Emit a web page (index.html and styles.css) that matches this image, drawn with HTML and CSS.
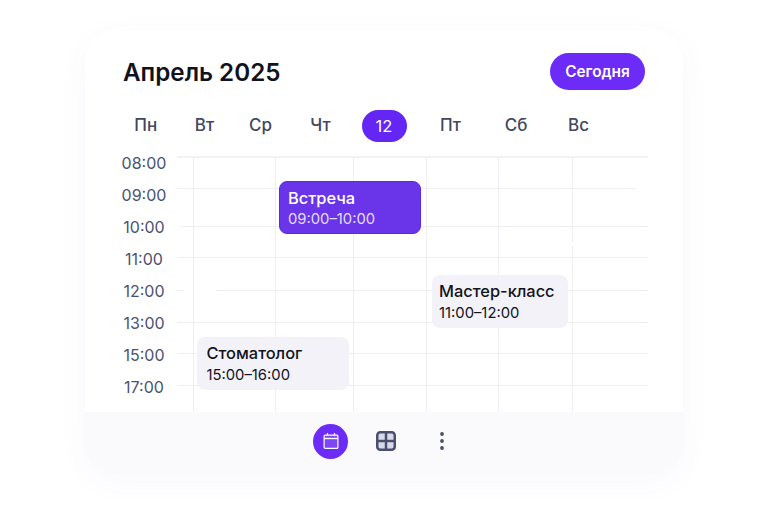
FILE: index.html
```html
<!DOCTYPE html>
<html lang="ru">
<head>
<meta charset="utf-8">
<title>Календарь</title>
<link rel="stylesheet" href="styles.css">
</head>
<body>
<main class="card">
  <div class="content">
    <header class="top">
      <h1 class="title">Апрель 2025</h1>
      <button class="today">Сегодня</button>
    </header>
    <div class="days">
      <span class="day">Пн</span>
      <span class="day">Вт</span>
      <span class="day">Ср</span>
      <span class="day">Чт</span>
      <span class="day-now"><b class="pill">12</b></span>
      <span class="day">Пт</span>
      <span class="day">Сб</span>
      <span class="day">Вс</span>
    </div>
    <div class="schedule">
      <div class="times">
        <span>08:00</span><span>09:00</span><span>10:00</span><span>11:00</span>
        <span>12:00</span><span>13:00</span><span>15:00</span><span>17:00</span>
      </div>
      <svg class="lines" width="598" height="258" viewBox="0 0 598 258" aria-hidden="true">
        <g class="hl">
          <path class="hl-top" d="M92 3H563"/>
          <path d="M92 34.500H551M95 72.500H563M92 103.500H563M92 136.500H99M131 136.500H563M92 168.500H563M92 199.500H563M92 231.500H563"/>
        </g>
        <path class="vl" d="M108.500 3V258M190.500 3V258M268.500 3V258M341.500 3V258M413.500 3V258M487.500 3V88M487.500 92V258"/>
      </svg>
      <article class="event event-meet">
        <h2>Встреча</h2>
        <p>09:00–10:00</p>
      </article>
      <article class="event event-class">
        <h2>Мастер-класс</h2>
        <p>11:00–12:00</p>
      </article>
      <article class="event event-dent">
        <h2>Стоматолог</h2>
        <p>15:00–16:00</p>
      </article>
    </div>
  </div>
  <nav class="bar">
    <span class="nav nav-on">
      <svg width="18" height="18" viewBox="0 0 18 18" fill="none" stroke="#fff" stroke-width="1.200">
        <rect x="2.100" y="3.100" width="13.800" height="13.300" rx="1" fill="#7d46f7"/>
        <path d="M2.100 6.500H15.900" stroke-width="1.400"/>
        <path d="M5.500 1V3.500M12.500 1V3.500"/>
      </svg>
    </span>
    <span class="nav">
      <svg width="20" height="20" viewBox="0 0 20 20" fill="#d9dae5" stroke="#4a4f70" stroke-width="2.500">
        <rect x="1.250" y="1.250" width="17.500" height="17.500" rx="3"/>
        <path d="M10 1.250V18.750M1.250 10H18.750"/>
      </svg>
    </span>
    <span class="nav">
      <svg width="6" height="20" viewBox="0 0 6 20" fill="#4a4f70">
        <circle cx="3" cy="3" r="1.900"/>
        <circle cx="3" cy="10" r="1.900"/>
        <circle cx="3" cy="17" r="1.900"/>
      </svg>
    </span>
  </nav>
</main>
</body>
</html>
```
FILE: styles.css
```css
* { box-sizing: border-box; }
html, body { margin: 0; height: 100%; }
body {
  width: 768px;
  height: 512px;
  overflow: hidden;
  background: #fff;
  font-family: Inter, "Liberation Sans", sans-serif;
  padding: 31px 85px 37px;
}
.card {
  width: 598px;
  height: 444px;
  background: #fff;
  border-radius: 32px;
  overflow: hidden;
  box-shadow: 0 6px 32px rgba(90, 80, 180, 0.045);
  display: flex;
  flex-direction: column;
}
.content { flex: 1; display: flex; flex-direction: column; min-height: 0; }
.top {
  display: flex;
  justify-content: space-between;
  align-items: center;
  padding: 22px 38px 0 38px;
}
.title {
  margin: 2px 0 0;
  font-size: 24.200px;
  line-height: 35px;
  font-weight: 600;
  color: #10131c;
}
.today {
  width: 95px;
  height: 37px;
  border: 0;
  padding: 0;
  border-radius: 19px;
  background: #6c2bf6;
  color: #fff;
  font: 600 15.400px Inter, "Liberation Sans", sans-serif;
}
.days {
  display: grid;
  grid-template-columns: 47.500px 70px 42px 78px 49px 84px 47px 78px;
  margin: 20px 0 0 37px;
  height: 32px;
  align-items: center;
  text-align: center;
  font-size: 17px;
  line-height: 30px;
  font-weight: 500;
  color: #41475f;
}
.day { padding-bottom: 2px; }
.pill {
  display: block;
  width: 45px;
  height: 32px;
  margin: 0 auto;
  border-radius: 16px;
  background: #6426f4;
  color: #fff;
  font-size: 16.500px;
  font-weight: 400;
  line-height: 32px;
}
.schedule { position: relative; flex: 1; margin-top: 12px; }
.times {
  display: flex;
  flex-direction: column;
  width: 48px;
  margin: -7px 0 0 35px;
  text-align: center;
  font-size: 16px;
  line-height: 32px;
  color: #4b5272;
}
.lines { position: absolute; left: 0; top: 0; }
.hl path { stroke: #eeeef4; stroke-width: 1; fill: none; }
.hl .hl-top { stroke: #f2f2f7; stroke-width: 2; }
.vl { stroke: #eeeef4; stroke-width: 1; fill: none; }
.event {
  position: absolute;
  height: 53px;
  border-radius: 8px;
  padding: 6px 9px;
  background: #f3f2f9;
  color: #11131c;
}
.event h2 { margin: 0; font-size: 16.400px; line-height: 20px; font-weight: 500; }
.event p { margin: 2px 0 0; font-size: 14.800px; line-height: 20px; font-weight: 400; }
.event-meet {
  left: 194px;
  top: 27px;
  width: 142px;
  background: #6a35e8;
  border: 1px solid #5a28e6;
  padding: 6px 8px;
  color: #fff;
}
.event-meet p { margin-top: 1px; color: #e4dcfb; }
.event-class { left: 347px; top: 121px; width: 136px; padding-left: 7px; }
.event-dent { left: 112px; top: 183px; width: 152px; padding-left: 9.500px; }
.bar {
  flex: none;
  height: 63px;
  background: #fafafd;
  display: flex;
  align-items: center;
  justify-content: center;
  padding: 0 0 5px 4px;
  margin-top: -1px;
}
.nav {
  width: 35px;
  height: 35px;
  display: flex;
  align-items: center;
  justify-content: center;
  margin-right: 20.500px;
}
.nav:last-child { margin-right: 0; }
.nav-on { background: #6c2bf6; border-radius: 50%; }
```
